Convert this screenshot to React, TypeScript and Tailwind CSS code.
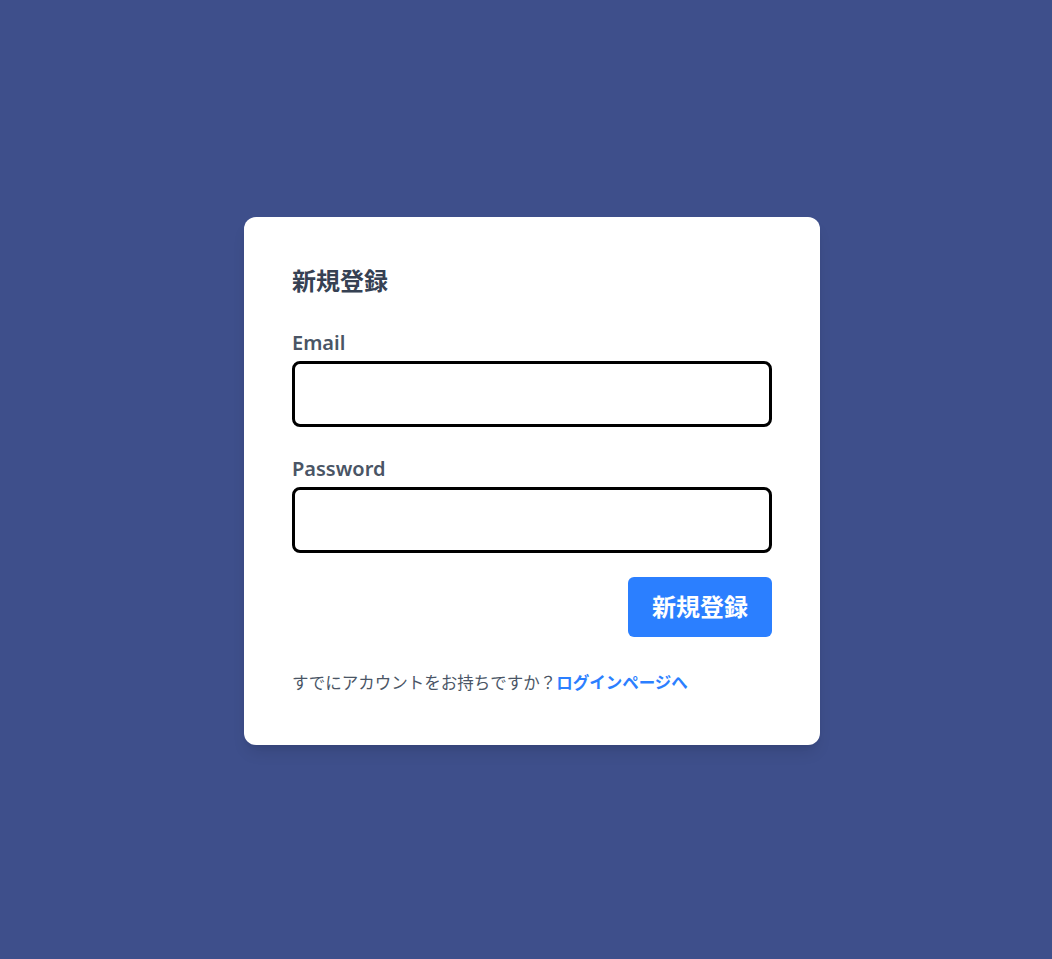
export default function App() {
	return (
		<div
			className="min-h-screen flex items-center justify-center pl-3 pt-0.5 bg-[#3e4f8b]"
			style={{ fontFamily: '"Noto Sans", "Noto Sans CJK JP", sans-serif' }}
		>
			<div className="w-[576px] bg-white rounded-xl shadow-lg p-12">
				<h1 className="text-2xl font-bold text-gray-700 mb-8">新規登録</h1>

				<label className="block text-xl leading-7 font-semibold text-gray-600 mb-1">
					Email
				</label>
				<input
					type="email"
					className="block w-full h-[66px] border-[3px] border-black rounded-lg px-3"
				/>

				<label className="block text-xl leading-7 font-semibold text-gray-600 mt-7 mb-1">
					Password
				</label>
				<input
					type="password"
					className="block w-full h-[66px] border-[3px] border-black rounded-lg px-3"
				/>

				<div className="flex justify-end mt-6">
					<button className="bg-blue-500 text-white text-2xl font-bold px-6 py-3.5 rounded-md">
						新規登録
					</button>
				</div>

				<p className="mt-8 text-[16.5px] leading-7 text-gray-600">
					すでにアカウントをお持ちですか？
					<a href="#" className="text-blue-500 font-semibold">
						ログインページへ
					</a>
				</p>
			</div>
		</div>
	)
}
